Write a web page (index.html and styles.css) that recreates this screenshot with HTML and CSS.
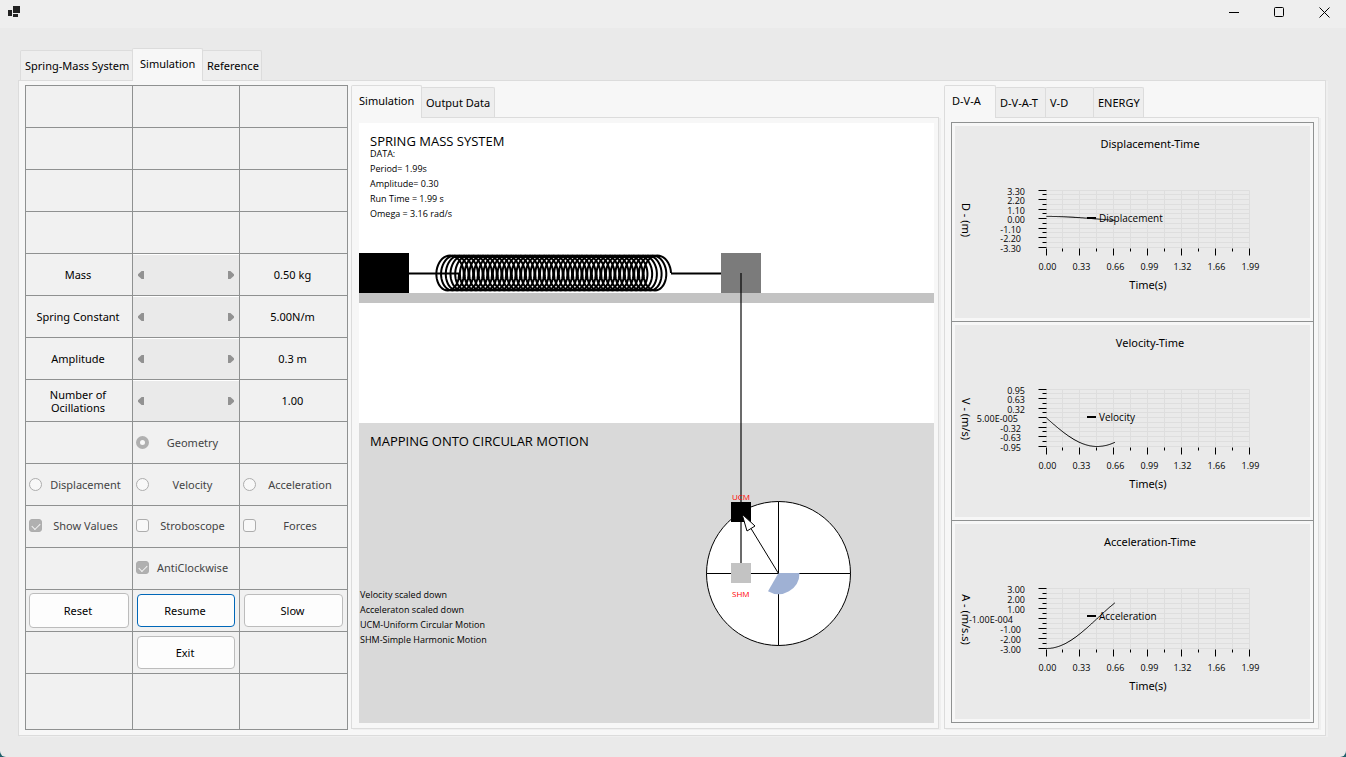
FILE: index.html
```
<!DOCTYPE html>
<html lang="en">
<head>
    <meta charset="UTF-8">
    <meta name="viewport" content="width=device-width, initial-scale=1.0">
    <title>Spring-Mass System</title>
    <link rel="stylesheet" href="styles.css">
</head>
<body>
    <div class="window">
        <header class="titlebar">
            <svg class="app-icon" width="14" height="12" viewBox="0 0 14 12">
                <path d="M1 4h4v6H1zM6 0h7v7H6zM6 8h5v3H6z" fill="#222"/>
            </svg>
            <div class="window-buttons">
                <button type="button" aria-label="Minimize"><svg width="11" height="11"><path d="M0 5.5h10"/></svg></button>
                <button type="button" aria-label="Maximize"><svg width="11" height="11"><rect x=".5" y=".5" width="9" height="9" rx="1"/></svg></button>
                <button type="button" aria-label="Close"><svg width="11" height="11"><path d="M.5 .5l10 10M10.5 .5l-10 10"/></svg></button>
            </div>
        </header>

        <main class="content">
            <div class="tabs main-tabs" role="tablist">
                <button type="button" class="tab" role="tab">Spring-Mass System</button>
                <button type="button" class="tab active" role="tab">Simulation</button>
                <button type="button" class="tab" role="tab">Reference</button>
            </div>

            <div class="page main-page">
                <form class="controls">
                    <div class="cell"></div><div class="cell"></div><div class="cell"></div>
                    <div class="cell"></div><div class="cell"></div><div class="cell"></div>
                    <div class="cell"></div><div class="cell"></div><div class="cell"></div>
                    <div class="cell"></div><div class="cell"></div><div class="cell"></div>

                    <label class="cell value" for="mass">Mass</label>
                    <div class="cell scroll"><input type="range" id="mass" disabled></div>
                    <output class="cell value" for="mass">0.50 kg</output>

                    <label class="cell value" for="spring">Spring Constant</label>
                    <div class="cell scroll"><input type="range" id="spring" disabled></div>
                    <output class="cell value" for="spring">5.00N/m</output>

                    <label class="cell value" for="amplitude">Amplitude</label>
                    <div class="cell scroll"><input type="range" id="amplitude" disabled></div>
                    <output class="cell value" for="amplitude">0.3 m</output>

                    <label class="cell value" for="count">Number of<br>Ocillations</label>
                    <div class="cell scroll"><input type="range" id="count" disabled></div>
                    <output class="cell value" for="count">1.00</output>

                    <div class="cell"></div>
                    <label class="cell option"><input type="radio" name="view" checked disabled><span>Geometry</span></label>
                    <div class="cell"></div>

                    <label class="cell option"><input type="radio" name="view" disabled><span>Displacement</span></label>
                    <label class="cell option"><input type="radio" name="view" disabled><span>Velocity</span></label>
                    <label class="cell option"><input type="radio" name="view" disabled><span>Acceleration</span></label>

                    <label class="cell option check"><input type="checkbox" checked disabled><span>Show Values</span></label>
                    <label class="cell option check"><input type="checkbox" disabled><span>Stroboscope</span></label>
                    <label class="cell option check"><input type="checkbox" disabled><span>Forces</span></label>

                    <div class="cell"></div>
                    <label class="cell option check"><input type="checkbox" checked disabled><span>AntiClockwise</span></label>
                    <div class="cell"></div>

                    <div class="cell action wide"><button type="button">Reset</button></div>
                    <div class="cell action"><button type="button" class="focused">Resume</button></div>
                    <div class="cell action"><button type="button">Slow</button></div>

                    <div class="cell"></div>
                    <div class="cell action"><button type="button">Exit</button></div>
                    <div class="cell"></div>

                    <div class="cell"></div><div class="cell"></div><div class="cell"></div>
                </form>

                <section class="panel">
                    <div class="tabs sim-tabs" role="tablist">
                        <button type="button" class="tab active" role="tab">Simulation</button>
                        <button type="button" class="tab" role="tab">Output Data</button>
                    </div>
                    <div class="page sim-page">
                        <svg class="stage" width="100%" height="600">
                            <rect width="100%" height="300" fill="#fff"/>
                            <rect y="300" width="100%" height="300" fill="#d9d9d9"/>

                            <text class="heading" x="11" y="23">SPRING MASS SYSTEM</text>
                            <text x="11" y="34">DATA:</text>
                            <text x="11" y="49">Period= 1.99s</text>
                            <text x="11" y="64">Amplitude= 0.30</text>
                            <text x="11" y="79">Run Time = 1.99 s</text>
                            <text x="11" y="94">Omega = 3.16 rad/s</text>

                            <!-- wall, floor, spring and mass -->
                            <rect y="170" width="100%" height="10" fill="#c3c3c3"/>
                            <rect y="130" width="50" height="40" fill="#000"/>
                            <path id="spring-path" fill="none" stroke="#000" stroke-width="2"/>
                            <rect x="362" y="130" width="40" height="40" fill="#7b7b7b"/>

                            <text class="heading" x="11" y="323">MAPPING ONTO CIRCULAR MOTION</text>
                            <text x="1" y="475">Velocity scaled down</text>
                            <text x="1" y="490">Acceleraton scaled down</text>
                            <text x="1" y="505">UCM-Uniform Circular Motion</text>
                            <text x="1" y="520">SHM-Simple Harmonic Motion</text>

                            <!-- reference circle -->
                            <circle cx="419.5" cy="450.5" r="72" fill="#fff" stroke="#000"/>
                            <path d="M347.5 450.5h144M419.5 378.5v144" stroke="#000"/>
                            <path d="M419.5 450h21a21 21 0 0 1-31.5 18.2z" fill="#9fb1d4"/>
                            <path d="M382 150v300" stroke="#000" stroke-opacity=".58" stroke-width="2"/>
                            <rect x="372" y="379" width="20" height="20" fill="#000"/>
                            <rect x="372" y="440" width="20" height="20" fill="#c3c3c3"/>
                            <path d="M419.5 450.5L392 405.5" stroke="#000"/>
                            <path d="M383 391l13 12-8 5z" fill="#fff" stroke="#000"/>
                            <text class="mark" x="373" y="377">UCM</text>
                            <text class="mark" x="373" y="474">SHM</text>
                        </svg>
                    </div>
                </section>

                <section class="panel chart-panel">
                    <div class="tabs chart-tabs" role="tablist">
                        <button type="button" class="tab active" role="tab">D-V-A</button>
                        <button type="button" class="tab" role="tab">D-V-A-T</button>
                        <button type="button" class="tab" role="tab">V-D</button>
                        <button type="button" class="tab" role="tab">ENERGY</button>
                    </div>
                    <div class="page chart-page">
                        <div class="charts">
                            <div class="chart"><svg id="chart-d" width="355" height="192"></svg></div>
                            <div class="chart"><svg id="chart-v" width="355" height="192"></svg></div>
                            <div class="chart"><svg id="chart-a" width="355" height="195"></svg></div>
                        </div>
                    </div>
                </section>
            </div>
        </main>
    </div>
    <script src="script.js"></script>
</body>
</html>
```

FILE: styles.css
```
* {
    box-sizing: border-box;
}

body {
    margin: 0;
    background: #1f5f6b;
    color: #000;
    font-family: "Noto Sans", "Open Sans", sans-serif;
    font-size: 11px;
    line-height: 13px;
}

button {
    font: inherit;
    color: inherit;
    padding: 0;
}

.window {
    min-height: 100vh;
    background: #eaeaea;
    border-radius: 0 0 6px 6px;
    overflow: hidden;
}

.titlebar {
    display: flex;
    justify-content: space-between;
    height: 28px;
    padding-left: 7px;
    background: #eee;
}

.app-icon {
    margin-top: 6px;
}

.window-buttons {
    display: flex;
}

.window-buttons button {
    display: flex;
    justify-content: center;
    width: 45px;
    padding: 7px 0 0 2px;
    border: none;
    background: none;
}

.window-buttons svg {
    fill: none;
    stroke: #000;
}

.content {
    padding: 20px 20px 0 18px;
}

/* tabs */
.tabs {
    display: grid;
    align-items: end;
    justify-content: start;
    height: 32px;
}

.main-tabs {
    grid-template-columns: 112px 70px 60px;
    padding-left: 2px;
}

.sim-tabs {
    grid-template-columns: 70px 74px;
}

.chart-tabs {
    grid-template-columns: 51px 50px 48px 51px;
}

.tab {
    height: 30px;
    margin-right: -1px;
    padding: 0 0 0 4px;
    border: 1px solid #dcdcdc;
    border-bottom: none;
    border-radius: 2px 2px 0 0;
    background: #eee;
    text-align: left;
    white-space: nowrap;
}

.tab:last-child {
    margin-right: 0;
}

.tab.active {
    position: relative;
    height: 33px;
    margin-bottom: -1px;
    padding: 0 0 4px 7px;
    background: #f7f7f7;
}

.page {
    border: 1px solid #dcdcdc;
    background: #f7f7f7;
    box-shadow: 2px 1px 0 #efefef;
}

.main-page {
    display: grid;
    grid-template-columns: 323fr 588fr 377fr;
    align-items: start;
    gap: 3px;
    padding: 4px 6px 5px;
}

.sim-page {
    padding: 5px 4px 5px 7px;
}

.chart-panel {
    padding-left: 2px;
}

.chart-page {
    padding: 4px 4px 5px 6px;
}

/* left table */
.controls {
    display: grid;
    grid-template-columns: 106fr 106fr 107fr;
    grid-template-rows: repeat(14, 41px) 55px;
    gap: 1px;
    padding: 1px;
    background: #8f9191;
}

.cell {
    display: flex;
    align-items: center;
    justify-content: center;
    background: #f1f1f1;
    text-align: center;
}

.value {
    padding-right: 2px;
}

.scroll {
    justify-content: space-between;
    padding: 0 5px;
    border-top: 1px solid #fff;
    background: #eaeaea;
}

.scroll::before,
.scroll::after {
    content: "";
    width: 6px;
    height: 8px;
    background: #929292;
    clip-path: polygon(0 40%, 60% 0, 100% 0, 100% 100%, 60% 100%, 0 60%);
}

.scroll::after {
    transform: scaleX(-1);
}

.scroll input {
    appearance: none;
    width: 70px;
    margin: 0;
    background: none;
}

.scroll input::-webkit-slider-thumb {
    appearance: none;
    width: 0;
}

.option {
    padding: 0 3px;
    color: #444;
}

.option.check {
    padding-bottom: 2px;
}

.option span {
    flex: 1;
}

.option input {
    appearance: none;
    width: 13px;
    height: 13px;
    margin: 0;
    border: 1px solid #adadad;
    border-radius: 3px;
    background: #f8f8f8;
}

.option input[type="radio"] {
    border-radius: 50%;
}

.option input[type="radio"]:checked {
    border: 4px solid #b0b0b0;
}

.option input[type="checkbox"]:checked {
    background: #b0b0b0;
}

.option input[type="checkbox"]:checked::before {
    content: "";
    display: block;
    width: 7px;
    height: 4px;
    margin: 3px 0 0 2px;
    border: solid #f4f4f4;
    border-width: 0 0 1px 1px;
    transform: rotate(-45deg);
}

.action {
    padding: 4px;
}

.action.wide {
    padding: 3px;
}

.action button {
    width: 100%;
    height: 100%;
    padding-right: 2px;
    border: 1px solid #bcbcbc;
    border-radius: 4px;
    background: #fdfdfd;
}

.action .focused {
    border-color: #0067b8;
}

/* drawing */
.stage {
    display: block;
    font-family: "Open Sans", sans-serif;
    font-size: 9px;
}

.stage .heading {
    font-size: 13px;
}

.stage .mark {
    fill: #f00;
    font-size: 8px;
}

/* charts */
.charts {
    display: grid;
    gap: 1px;
    padding: 1px;
    background: #8f9191;
}

.chart {
    padding: 3px;
    background: #f7f7f7;
}

.chart svg {
    display: block;
    width: 100%;
    background: #eaeaea;
}

.chart text {
    text-anchor: middle;
}

.chart .num {
    font-family: "Open Sans", sans-serif;
    font-size: 9px;
}

.chart .y-num {
    text-anchor: end;
}

.chart .legend {
    font-family: "Open Sans", sans-serif;
    text-anchor: start;
    font-size: 10px;
}

.chart .grid {
    stroke: #dedede;
}

.chart .tick {
    stroke: #000;
}

.chart .curve {
    fill: none;
    stroke: #000;
}
```

FILE: script.js
```
const OMEGA = 3.16;
const PERIOD = 1.99;
const NOW = 0.68;

function add(svg, name, attrs, text) {
    const el = document.createElementNS('http://www.w3.org/2000/svg', name);
    for (const key in attrs) el.setAttribute(key, attrs[key]);
    if (text) el.textContent = text;
    svg.appendChild(el);
}

function drawSpring() {
    const turns = 45;
    const steps = 40;
    let d = 'M50 150.5H100';
    for (let i = 1; i <= turns * steps; i++) {
        const a = i / steps * 2 * Math.PI;
        const x = 87.5 + 212 * i / (turns * steps) + 12.5 * Math.cos(a);
        const y = 150 + 17.5 * Math.sin(a);
        d += `L${x.toFixed(2)} ${y.toFixed(2)}`;
    }
    d += 'M312 150.5H362';
    document.getElementById('spring-path').setAttribute('d', d);
}

function drawChart(id, o) {
    const svg = document.getElementById(id);
    const left = 91.5, top = 64.5, width = 203, height = o.height;
    const bottom = top + height;

    add(svg, 'text', { x: 195, y: 22 }, o.title);

    for (let i = 0; i <= 12; i++) {
        const x = Math.round(left + width * i / 12) - 0.5;
        const y = Math.round(top + height * i / 12) - 0.5;
        add(svg, 'path', { class: 'grid', d: `M${x} ${top}V${bottom}M${left} ${y}H${left + width}` });
        add(svg, 'path', { class: 'tick', d: `M${x} ${bottom + 1}v${i % 2 ? 3 : 7}M${left} ${y}h${i % 2 ? -4 : -8}` });
    }

    ['0.00', '0.33', '0.66', '0.99', '1.32', '1.66', '1.99'].forEach((label, i) => {
        add(svg, 'text', { class: 'num', x: left + 1 + Math.round(width * i / 6), y: bottom + 22 }, label);
    });

    o.labels.forEach((label, i) => {
        // longer labels end further from the axis
        const x = label.length > 9 ? 58 : label.length > 8 ? 63 : label.length > 4 ? 66 : 70;
        add(svg, 'text', { class: 'num y-num', x: x, y: Math.round(top + height * i / 6) + 4 }, label);
    });

    add(svg, 'text', { x: 193, y: bottom + 41 }, 'Time(s)');
    const mid = top + height / 2;
    add(svg, 'text', { transform: `translate(7 ${mid + 1}) rotate(90)` }, o.unit);

    let d = '';
    for (let t = 0; t <= NOW; t += 0.01) {
        const x = left + width * t / PERIOD;
        const y = mid - o.value(t) / o.max * height / 2;
        d += (d ? 'L' : 'M') + x.toFixed(1) + ' ' + y.toFixed(1);
    }
    add(svg, 'path', { class: 'curve', d: d });

    add(svg, 'path', { d: 'M132 92h9', stroke: '#000', 'stroke-width': 2 });
    add(svg, 'text', { class: 'legend', x: 144, y: 96 }, o.legend);
}

drawSpring();

drawChart('chart-d', {
    title: 'Displacement-Time',
    unit: 'D - (m)',
    legend: 'Displacement',
    height: 57,
    max: 3.3,
    labels: ['3.30', '2.20', '1.10', '0.00', '-1.10', '-2.20', '-3.30'],
    value: t => 0.3 * Math.cos(OMEGA * t)
});

drawChart('chart-v', {
    title: 'Velocity-Time',
    unit: 'V - (m/s)',
    legend: 'Velocity',
    height: 57,
    max: 0.95,
    labels: ['0.95', '0.63', '0.32', '5.00E-005', '-0.32', '-0.63', '-0.95'],
    value: t => -0.95 * Math.sin(OMEGA * t)
});

drawChart('chart-a', {
    title: 'Acceleration-Time',
    unit: 'A - (m/s.s)',
    legend: 'Acceleration',
    height: 60,
    max: 3,
    labels: ['3.00', '2.00', '1.00', '-1.00E-004', '-1.00', '-2.00', '-3.00'],
    value: t => -3 * Math.cos(OMEGA * t)
});
```
